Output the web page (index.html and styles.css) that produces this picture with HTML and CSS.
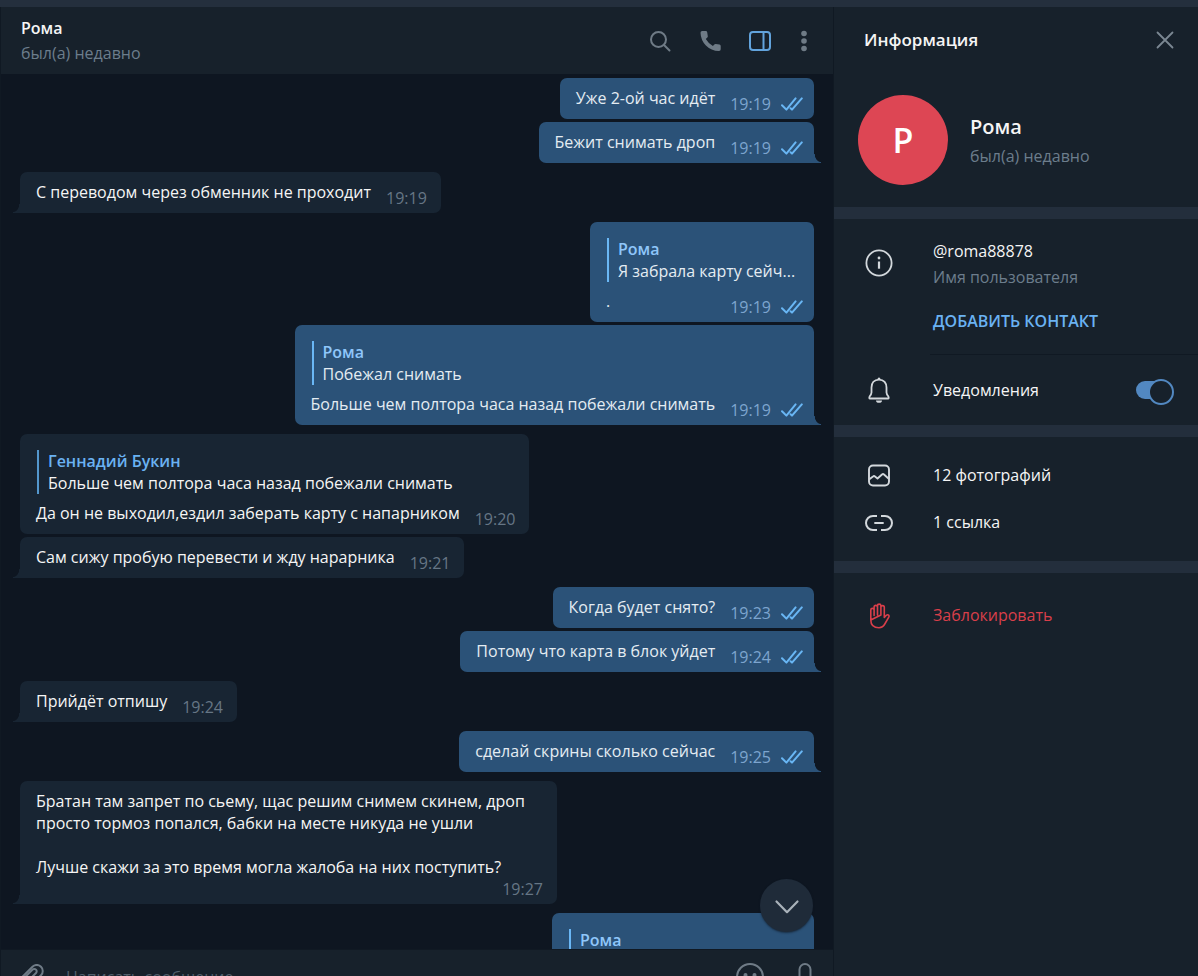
FILE: index.html
```html
<!DOCTYPE html>
<html lang="ru">
<head>
<meta charset="utf-8">
<meta name="viewport" content="width=device-width, initial-scale=1">
<title>Рома</title>
<link rel="stylesheet" href="styles.css">
</head>
<body>
<svg class="sprite" aria-hidden="true">
  <symbol id="checks" viewBox="0 0 22 14">
    <path d="M1 8.200 5.400 12.600 14.600 1.400M9.600 11.200 11 12.600 20.800 1.400" fill="none" stroke="currentColor" stroke-width="2" stroke-linecap="round" stroke-linejoin="round"/>
  </symbol>
</svg>
<div class="app">
  <div class="titlebar"></div>
  <div class="columns">
    <main class="chat">
      <header class="chat-header">
        <div class="chat-peer">
          <h1 class="peer-name">Рома</h1>
          <p class="muted">был(а) недавно</p>
        </div>
        <button class="icon-button" type="button" aria-label="Поиск">
          <svg width="24" height="24" viewBox="0 0 24 24" fill="none" stroke="currentColor" stroke-width="2" stroke-linecap="round"><circle cx="10.500" cy="10.500" r="7.500"/><path d="M16 16 21.500 21.500"/></svg>
        </button>
        <button class="icon-button" type="button" aria-label="Позвонить">
          <svg width="24" height="24" viewBox="0 0 24 24" fill="currentColor"><path d="M4.200 2H7.800Q9 2 9.200 3.200L9.800 7.200Q9.900 8 9.300 8.600L7.800 10.100Q10.200 14.400 14.900 16.900L16.300 15.400Q16.900 14.800 17.700 14.900L21.500 15.600Q22.700 15.900 22.700 17V20.300Q22.700 22.100 21 22.100Q13.100 21.800 7.900 16.500 2.800 11.200 2.500 3.700 2.500 2 4.200 2Z"/></svg>
        </button>
        <button class="icon-button active" type="button" aria-label="Информация о собеседнике">
          <svg width="24" height="22" viewBox="0 0 24 22" fill="none" stroke="currentColor" stroke-width="2"><rect x="2" y="2" width="20" height="18" rx="3"/><path d="M15.500 2V20"/></svg>
        </button>
        <button class="icon-button narrow" type="button" aria-label="Меню">
          <svg width="8" height="22" viewBox="0 0 8 22" fill="currentColor"><circle cx="4" cy="3.500" r="2.800"/><circle cx="4" cy="11" r="2.800"/><circle cx="4" cy="18.500" r="2.800"/></svg>
        </button>
      </header>

      <div class="history">
        <div class="messages">
          <div class="group out">
            <article class="bubble"><p>Уже 2-ой час идёт</p><span class="meta"><time>19:19</time><svg class="checks"><use href="#checks"/></svg></span></article>
            <article class="bubble tail"><p>Бежит снимать дроп</p><span class="meta"><time>19:19</time><svg class="checks"><use href="#checks"/></svg></span></article>
          </div>
          <div class="group in">
            <article class="bubble tail"><p>С переводом через обменник не проходит</p><span class="meta"><time>19:19</time></span></article>
          </div>
          <div class="group out">
            <article class="bubble with-reply short">
              <blockquote class="reply"><strong>Рома</strong><span>Я забрала карту сейч...</span></blockquote>
              <p>.</p><span class="meta"><time>19:19</time><svg class="checks"><use href="#checks"/></svg></span>
            </article>
            <article class="bubble with-reply tail">
              <blockquote class="reply"><strong>Рома</strong><span>Побежал снимать</span></blockquote>
              <p>Больше чем полтора часа назад побежали снимать</p><span class="meta"><time>19:19</time><svg class="checks"><use href="#checks"/></svg></span>
            </article>
          </div>
          <div class="group in">
            <article class="bubble with-reply">
              <blockquote class="reply"><strong>Геннадий Букин</strong><span>Больше чем полтора часа назад побежали снимать</span></blockquote>
              <p>Да он не выходил,ездил заберать карту с напарником</p><span class="meta"><time>19:20</time></span>
            </article>
            <article class="bubble tail"><p>Сам сижу пробую перевести и жду нарарника</p><span class="meta"><time>19:21</time></span></article>
          </div>
          <div class="group out">
            <article class="bubble"><p>Когда будет снято?</p><span class="meta"><time>19:23</time><svg class="checks"><use href="#checks"/></svg></span></article>
            <article class="bubble tail"><p>Потому что карта в блок уйдет</p><span class="meta"><time>19:24</time><svg class="checks"><use href="#checks"/></svg></span></article>
          </div>
          <div class="group in">
            <article class="bubble tail"><p>Прийдёт отпишу</p><span class="meta"><time>19:24</time></span></article>
          </div>
          <div class="group out">
            <article class="bubble tail"><p>сделай скрины сколько сейчас</p><span class="meta"><time>19:25</time><svg class="checks"><use href="#checks"/></svg></span></article>
          </div>
          <div class="group in">
            <article class="bubble tail long"><p>Братан там запрет по сьему, щас решим снимем скинем, дроп просто тормоз попался, бабки на месте никуда не ушли<br><br>Лучше скажи за это время могла жалоба на них поступить?</p><span class="meta"><time>19:27</time></span></article>
          </div>
          <div class="group out">
            <article class="bubble with-reply medium">
              <blockquote class="reply"><strong>Рома</strong></blockquote>
            </article>
          </div>
        </div>
        <button class="scroll-down" type="button" aria-label="Вниз">
          <svg width="26" height="16" viewBox="0 0 26 16" fill="none" stroke="currentColor" stroke-width="2.200" stroke-linecap="round" stroke-linejoin="round"><path d="M2.500 3.500 13 14.200 23.500 3.500"/></svg>
        </button>
      </div>

      <form class="composer">
        <button class="composer-button" type="button" aria-label="Прикрепить файл">
          <svg width="26" height="26" viewBox="0 0 26 26" fill="none" stroke="currentColor" stroke-width="2" stroke-linecap="round"><path d="M7.500 19.500 18 9a2.300 2.300 0 0 0-3.400-3.400L4.500 15.700a5 5 0 0 0 7 7L23 11.200a6 6 0 0 0-8.500-8.500L3 14.200"/></svg>
        </button>
        <input class="composer-input" type="text" aria-label="Сообщение" placeholder="Написать сообщение...">
        <button class="composer-button" type="button" aria-label="Эмодзи">
          <svg width="28" height="28" viewBox="0 0 28 28" fill="none" stroke="currentColor" stroke-width="2" stroke-linecap="round"><circle cx="14" cy="14" r="13"/><path d="M8 18q6 5 12 0"/><circle cx="9.500" cy="12" r="1" fill="currentColor"/><circle cx="18.500" cy="12" r="1" fill="currentColor"/></svg>
        </button>
        <button class="composer-button" type="button" aria-label="Голосовое сообщение">
          <svg width="28" height="28" viewBox="0 0 28 28" fill="none" stroke="currentColor" stroke-width="2" stroke-linecap="round"><rect x="8.500" y="1" width="11" height="18" rx="5.500"/><path d="M4 15a10 9 0 0 0 20 0M14 24v3"/></svg>
        </button>
      </form>
    </main>

    <aside class="info">
      <section class="info-section">
        <div class="info-header">
          <h2>Информация</h2>
          <button class="close" type="button" aria-label="Закрыть">
            <svg width="18" height="18" viewBox="0 0 18 18" fill="none" stroke="currentColor" stroke-width="1.800" stroke-linecap="round"><path d="M1.500 1.500 16.500 16.500M16.500 1.500 1.500 16.500"/></svg>
          </button>
        </div>
        <div class="profile">
          <div class="avatar">Р</div>
          <div>
            <h3 class="profile-name">Рома</h3>
            <p class="muted">был(а) недавно</p>
          </div>
        </div>
      </section>

      <section class="info-section">
        <div class="row user-row">
          <svg class="row-icon" viewBox="0 0 30 30" fill="none" stroke="currentColor" stroke-width="1.800"><circle cx="15" cy="14" r="12.600"/><path d="M15 12.500V19.700" stroke-width="2.200"/><circle cx="15" cy="9" r="1.400" fill="currentColor" stroke="none"/></svg>
          <div>
            <p>@roma88878</p>
            <p class="muted caption">Имя пользователя</p>
          </div>
        </div>
        <button class="add-contact" type="button">ДОБАВИТЬ КОНТАКТ</button>
        <div class="separator"></div>
        <label class="row notify-row">
          <svg class="row-icon" viewBox="0 0 30 30" fill="none" stroke="currentColor" stroke-width="1.800" stroke-linejoin="round"><path d="M15 4.600C10 4.600 7.500 8.200 7.500 12.500V17.500Q7.500 19 5.600 21.500 4.800 23.500 6 23.500H24Q25.200 23.500 24.400 21.500 22.500 19 22.500 17.500V12.500C22.500 8.200 20 4.600 15 4.600Z"/><path d="M13.500 4.500a1.500 2 0 0 1 3 0ZM12 25.500h6a3 2.300 0 0 1-6 0Z" fill="currentColor" stroke="none"/></svg>
          <span>Уведомления</span>
          <input class="toggle" type="checkbox" checked>
        </label>
      </section>

      <section class="info-section media">
        <button class="row" type="button">
          <svg class="row-icon" viewBox="0 0 30 30" fill="none" stroke="currentColor" stroke-width="1.900" stroke-linejoin="round"><rect x="5" y="5.500" width="20" height="20" rx="4"/><path d="M5 19.500 9 16.500Q10 15.700 11 16.500L13.500 18.500 18 14.500Q19 13.700 20 14.500L25 19"/></svg>
          <span>12 фотографий</span>
        </button>
        <button class="row" type="button">
          <svg class="row-icon" viewBox="0 0 30 30" fill="none" stroke="currentColor" stroke-width="2"><path d="M13 9H9a6.700 6.700 0 0 0 0 14H13M17 9H21a6.700 6.700 0 0 1 0 14H17M10.300 16H19.700"/></svg>
          <span>1 ссылка</span>
        </button>
      </section>

      <section class="info-section block">
        <button class="row danger" type="button">
          <svg class="row-icon" viewBox="0 0 30 30" fill="none" stroke="currentColor" stroke-width="1.600" stroke-linecap="round" stroke-linejoin="round"><path d="M6.800 20V10a1.600 1.600 0 0 1 3.300 0V15.500M10.100 15.500V7.100a1.700 1.700 0 0 1 3.400 0V15M13.500 15V5.800a1.700 1.700 0 0 1 3.400 0V15M16.900 15V7.300a1.700 1.700 0 0 1 3.400 0V17.500L22.300 15.300Q23.600 14.200 24.700 15.200 25.500 16 24.800 17.200L20.800 24Q18.800 27.700 15 27.700 6.800 27.700 6.800 20Z"/></svg>
          <span>Заблокировать</span>
        </button>
      </section>
    </aside>
  </div>
</div>
</body>
</html>
```

FILE: styles.css
```css
* {
  box-sizing: border-box;
}

body {
  margin: 0;
  height: 100vh;
  overflow: hidden;
  background: #0e1621;
  color: #f5f5f5;
  font: 16px/22px "Open Sans", "Noto Sans", sans-serif;
}

h1, h2, h3, p, blockquote {
  margin: 0;
  font-size: inherit;
}

h1, h2, h3, strong {
  font-weight: 600;
}

button {
  padding: 0;
  border: 0;
  background: none;
  color: inherit;
  font: inherit;
  text-align: left;
  cursor: pointer;
}

svg {
  display: block;
}

.sprite {
  position: absolute;
  width: 0;
  height: 0;
}

.muted {
  color: #6c7d8c;
}

/* The composer continues below the window's lower edge. */
.app {
  display: flex;
  flex-direction: column;
  height: calc(100vh + 28px);
}

.titlebar {
  flex: none;
  height: 7px;
  background: #242f3d;
}

.columns {
  display: flex;
  flex: 1;
  min-height: 0;
}

/* Chat */

.chat {
  display: flex;
  flex: 1;
  flex-direction: column;
  min-width: 0;
  border: solid #101923;
  border-width: 0 1px;
}

.chat-header {
  display: flex;
  flex: none;
  align-items: center;
  height: 67px;
  padding: 0 10px 0 20px;
  background: #17212b;
}

.chat-peer {
  flex: 1;
}

.peer-name {
  margin-bottom: 3px;
}

.icon-button {
  display: flex;
  align-items: center;
  justify-content: center;
  width: 50px;
  height: 50px;
  color: #6f7b86;
}

.icon-button.narrow {
  width: 38px;
}

.icon-button.active {
  color: #62a3dc;
}

.history {
  position: relative;
  flex: 1;
  min-height: 0;
}

.messages {
  display: flex;
  flex-direction: column;
  gap: 9px;
  height: 100%;
  padding: 4px 19px 0;
  overflow: hidden;
}

.group {
  display: flex;
  flex: none;
  flex-direction: column;
  align-items: flex-start;
  gap: 3px;
}

.group.out {
  align-items: flex-end;
}

.bubble {
  --fill: #182533;
  position: relative;
  display: grid;
  grid-template-columns: 1fr auto;
  column-gap: 15px;
  padding: 9px 14px 10px 16px;
  border-radius: 7px;
  background: var(--fill);
}

.out .bubble {
  --fill: #2b5278;
  padding-right: 11px;
  color: #e4ecf2;
}

.bubble.with-reply,
.out .bubble.with-reply {
  padding-top: 16px;
}

.bubble.short {
  min-width: 224px;
}

.bubble.medium {
  min-width: 262px;
}

.bubble.long {
  max-width: 537px;
}

.long p {
  grid-column: 1 / -1;
}

.long .meta {
  grid-column: 2;
}

.in .tail {
  border-bottom-left-radius: 0;
}

.out .tail {
  border-bottom-right-radius: 0;
}

.tail::after {
  content: "";
  position: absolute;
  bottom: 0;
  width: 7px;
  height: 9px;
}

.in .tail::after {
  right: 100%;
  background: radial-gradient(7px 9px at 0 0, transparent 84%, var(--fill) 94%);
}

.out .tail::after {
  left: 100%;
  background: radial-gradient(7px 9px at 100% 0, transparent 84%, var(--fill) 94%);
}

.reply {
  display: flex;
  grid-column: 1 / -1;
  flex-direction: column;
  margin: 0 0 8px 1px;
  padding-left: 9px;
  border-left: 2px solid #5397cd;
}

.reply strong {
  color: #6ab2f2;
}

.out .reply {
  border-color: #6ab7f5;
}

.out .reply strong {
  color: #8fc6fa;
}

.meta {
  display: flex;
  align-self: end;
  gap: 11px;
  margin-bottom: -6px;
  color: #667685;
}

.out .meta {
  gap: 10px;
  color: #7da5cf;
}

.checks {
  align-self: center;
  width: 22px;
  height: 14px;
  color: #69b6f4;
}

.scroll-down {
  position: absolute;
  right: 20px;
  bottom: 17px;
  display: flex;
  align-items: center;
  justify-content: center;
  width: 53px;
  height: 53px;
  border-radius: 50%;
  background: #1f2b39;
  box-shadow: 0 1px 2px #0e162199;
  color: #a9b2ba;
}

.composer {
  display: flex;
  flex: none;
  align-items: center;
  gap: 27px;
  height: 55px;
  padding: 0 14px 0 17px;
  border-top: 1px solid #101923;
  background: #17212b;
  color: #6f7b86;
}

.composer-input {
  flex: 1;
  min-width: 0;
  margin-left: -5px;
  padding: 0;
  border: 0;
  outline: 0;
  background: none;
  color: #f5f5f5;
  font: inherit;
}

.composer-input::placeholder {
  color: #505e6a;
  opacity: 1;
}

/* Info panel */

.info {
  flex: 0 0 364px;
  background: #17212b;
}

.info-section {
  border-bottom: 12px solid #232e3c;
}

.info-section:last-child {
  border-bottom: 0;
}

.info-header {
  display: flex;
  align-items: center;
  justify-content: space-between;
  height: 66px;
  padding: 0 24px 0 30px;
}

.info-header h2 {
  font-size: 17px;
}

.close {
  color: #7b8792;
}

.profile {
  display: flex;
  align-items: center;
  gap: 22px;
  padding: 22px 24px;
}

.avatar {
  display: flex;
  align-items: center;
  justify-content: center;
  width: 90px;
  height: 90px;
  border-radius: 50%;
  background: #dd4654;
  color: #fff;
  font-size: 34px;
  font-weight: 600;
}

.profile-name {
  margin: 2px 0 7px;
  font-size: 20px;
}

.row {
  display: flex;
  align-items: center;
  gap: 39px;
  width: 100%;
  height: 47px;
  padding: 0 24px 0 30px;
}

.row-icon {
  flex: none;
  width: 30px;
  height: 30px;
  color: #d3d8dc;
}

.user-row {
  height: auto;
  padding-top: 21px;
}

.caption {
  margin-top: 4px;
}

.add-contact {
  display: block;
  margin: 22px 0 22px 99px;
  color: #6ab2f2;
  font-weight: 600;
}

.separator {
  height: 1px;
  margin-left: 96px;
  background: #101923;
}

.notify-row {
  height: 70px;
}

.toggle {
  position: relative;
  width: 38px;
  height: 22px;
  margin: 0 0 0 auto;
  appearance: none;
}

.toggle::before {
  content: "";
  position: absolute;
  inset: 2px 4px 2px 0;
  border-radius: 9px;
  background: #5288c1;
}

.toggle::after {
  content: "";
  position: absolute;
  top: 0;
  right: 0;
  width: 22px;
  height: 22px;
  border: 2px solid #5288c1;
  border-radius: 50%;
  background: #17212b;
}

.media {
  padding: 14px 0 16px;
}

.block {
  padding-top: 18px;
}

.danger,
.danger .row-icon {
  color: #d93f4a;
}
```
